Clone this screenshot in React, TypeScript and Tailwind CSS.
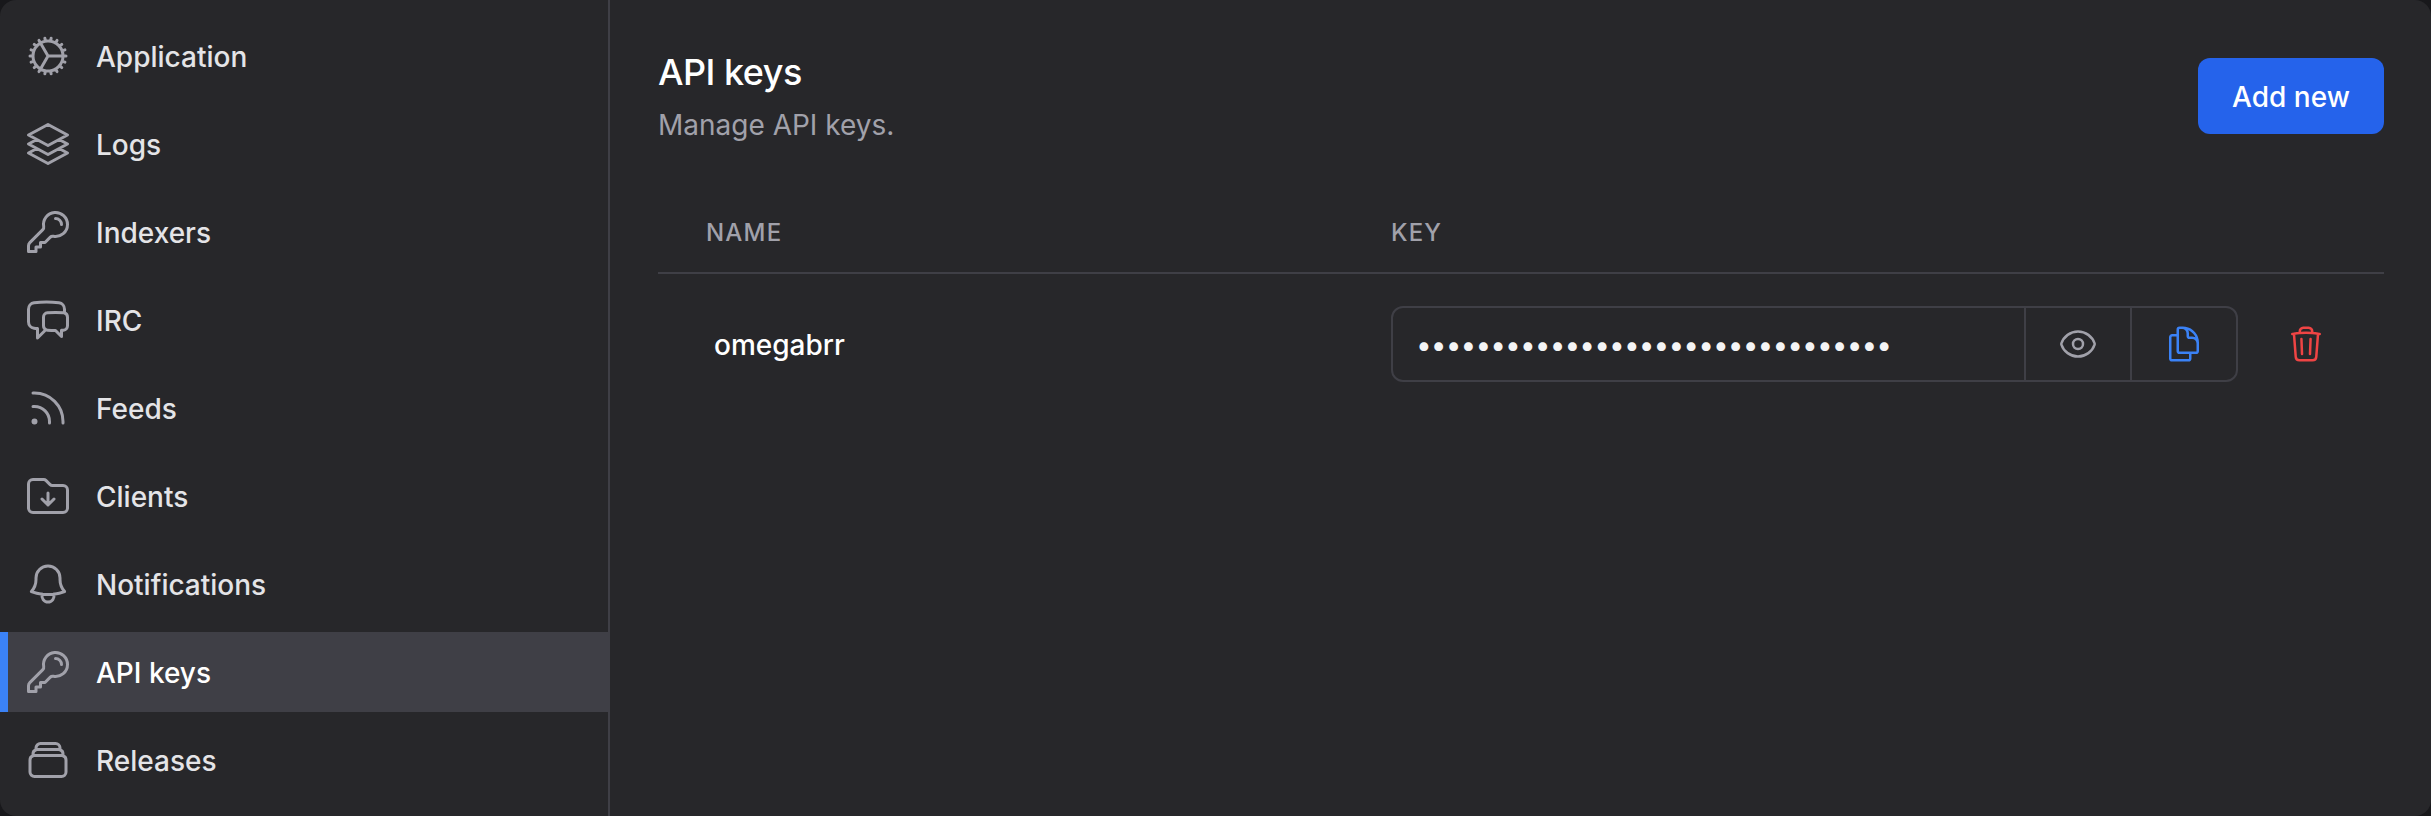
import type { IconType } from "react-icons";
import {
  HiOutlineBell,
  HiOutlineChatBubbleLeftRight,
  HiOutlineCog,
  HiOutlineDocumentDuplicate,
  HiOutlineEye,
  HiOutlineFolderArrowDown,
  HiOutlineKey,
  HiOutlineRectangleStack,
  HiOutlineRss,
  HiOutlineSquare3Stack3D,
  HiOutlineTrash,
} from "react-icons/hi2";

interface NavItem {
  label: string;
  icon: IconType;
  active?: boolean;
}

const navItems: NavItem[] = [
  { label: "Application", icon: HiOutlineCog },
  { label: "Logs", icon: HiOutlineSquare3Stack3D },
  { label: "Indexers", icon: HiOutlineKey },
  { label: "IRC", icon: HiOutlineChatBubbleLeftRight },
  { label: "Feeds", icon: HiOutlineRss },
  { label: "Clients", icon: HiOutlineFolderArrowDown },
  { label: "Notifications", icon: HiOutlineBell },
  { label: "API keys", icon: HiOutlineKey, active: true },
  { label: "Releases", icon: HiOutlineRectangleStack },
];

function Sidebar() {
  return (
    <nav className="flex w-[610px] shrink-0 flex-col gap-2 border-r-2 border-[#3f3f46] pt-4">
      {navItems.map(({ label, icon: Icon, active }) => (
        <a
          key={label}
          className={
            active
              ? "flex h-20 shrink-0 items-center border-l-8 border-[#3b82f6] bg-[#3f3f46] pl-4 text-white"
              : "flex h-20 shrink-0 items-center border-l-8 border-transparent pl-4 text-[#e4e4e7]"
          }
        >
          <Icon className="size-12 shrink-0 text-[#a1a1aa]" />
          <span className="ml-6 pt-0.5 text-[28px] leading-10 font-medium">{label}</span>
        </a>
      ))}
    </nav>
  );
}

function KeyField() {
  return (
    <div className="flex h-[76px] w-[847px] rounded-xl border-2 border-[#3f3f46]">
      <div className="flex flex-1 items-center pt-0.5 pl-[23px] text-[28px] leading-10 tracking-[-0.9px] text-[#f4f4f5]">
        {"•".repeat(32)}
      </div>
      <button className="flex w-[106px] items-center justify-center border-l-2 border-[#3f3f46] text-[#a1a1aa]">
        <HiOutlineEye className="size-10" />
      </button>
      <button className="flex w-[106px] items-center justify-center border-l-2 border-[#3f3f46] text-[#3b82f6]">
        <HiOutlineDocumentDuplicate className="size-10" />
      </button>
    </div>
  );
}

export default function App() {
  return (
    <div className="h-[816px] w-[2431px] bg-[#18181b] font-[Inter,sans-serif]">
      <div className="flex h-full overflow-hidden rounded-2xl bg-[#27272a]">
        <Sidebar />
        <main className="flex-1 pr-[47px] pl-12">
          <header className="flex h-[164px] items-start justify-between pt-12">
            <div>
              <h2 className="text-[36px] leading-[48px] font-medium tracking-[-0.5px] text-white">API keys</h2>
              <p className="mt-[9px] text-[28px] leading-10 text-[#a1a1aa]">Manage API keys.</p>
            </div>
            <button className="mt-2.5 flex h-[76px] w-[186px] items-center justify-center rounded-xl bg-[#2563eb] pt-0.5 text-[28px] font-medium text-white">
              Add new
            </button>
          </header>
          <section className="mt-[42px]">
            <div className="flex h-[68px] border-b-2 border-[#3f3f46] pt-[11px] pl-12 text-2xl leading-8 font-medium tracking-[1.2px] text-[#a1a1aa]">
              <span className="w-[685px]">NAME</span>
              <span>KEY</span>
            </div>
            <div className="flex items-center pt-8">
              <span className="w-[733px] pt-0.5 pl-14 text-[28px] leading-10 font-medium text-white">omegabrr</span>
              <KeyField />
              <button className="ml-12 text-[#ef4444]">
                <HiOutlineTrash className="size-10" />
              </button>
            </div>
          </section>
        </main>
      </div>
    </div>
  );
}
